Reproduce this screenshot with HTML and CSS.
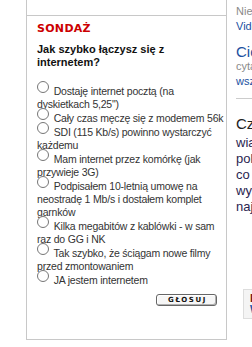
FILE: index.html
```html
<!DOCTYPE html>
<html lang="pl">
<head>
  <meta charset="UTF-8" />
  <title>Sondaż</title>
  <link rel="stylesheet" href="styles.css">
</head>
<body>
  <div class="page">
    <div class="gutter"></div>

    <div class="poll-col">
      <div class="poll-top"></div>
      <form class="poll">
        <h3 class="poll-title">SONDAŻ</h3>
        <p class="poll-question">Jak szybko łączysz się z internetem?</p>
        <ul class="options">
          <li><label><input type="radio" name="answer" value="1"> Dostaję internet pocztą (na dyskietkach 5,25")</label></li>
          <li><label><input type="radio" name="answer" value="2"> Cały czas męczę się z modemem 56k</label></li>
          <li><label><input type="radio" name="answer" value="3"> SDI (115 Kb/s) powinno wystarczyć każdemu</label></li>
          <li><label><input type="radio" name="answer" value="4"> Mam internet przez komórkę (jak przywieje 3G)</label></li>
          <li><label><input type="radio" name="answer" value="5"> Podpisałem 10-letnią umowę na neostradę 1 Mb/s i dostałem komplet garnków</label></li>
          <li><label><input type="radio" name="answer" value="6"> Kilka megabitów z kablówki - w sam raz do GG i NK</label></li>
          <li><label><input type="radio" name="answer" value="7"> Tak szybko, że ściągam nowe filmy przed zmontowaniem</label></li>
          <li><label><input type="radio" name="answer" value="8"> JA jestem internetem</label></li>
        </ul>
        <div class="poll-actions">
          <button type="button" class="vote-btn">GŁOSUJ</button>
        </div>
      </form>
    </div>

    <div class="side">
      <div class="side-news">
        <a class="small grey">Nieruchomości</a>
        <a class="small blue">Video</a>
        <a class="big blue">Ciekawostki</a>
        <span class="small grey">cytaty dnia</span>
        <a class="small blue">wszystkie</a>
      </div>
      <div class="side-article">
        <h4 class="big dark">Czytaj</h4>
        <p>wiadomości<br>polityka<br>co słychać<br>wywiady<br>najnowsze</p>
      </div>
      <div class="side-box">
        <b>Ekstra</b>
        <a>Więcej</a>
      </div>
    </div>
  </div>
</body>
</html>
```

FILE: styles.css
```css
body {
  margin: 0;
  font-family: 'Liberation Sans', Arial, sans-serif;
  background: #fff;
  color: #222;
  overflow: hidden;
}

.page {
  display: flex;
  width: 252px;
  height: 347px;
  overflow: hidden;
}

.gutter {
  width: 26px;
  flex-shrink: 0;
}

.poll-col {
  width: 199px;
  flex-shrink: 0;
  border-left: 1px solid #c8c8c8;
  border-right: 1px solid #c8c8c8;
  align-self: flex-start;
}

.poll-top {
  height: 15px;
  border-bottom: 1px solid #c8c8c8;
}

.poll {
  padding: 6px 2px 33px 10px;
  border-bottom: 1px solid #c8c8c8;
  font-size: 11px;
}

.poll-title {
  margin: 0 0 8px;
  font-family: 'DejaVu Sans', sans-serif;
  font-size: 11px;
  line-height: 13px;
  color: #cc0000;
  letter-spacing: 0.3px;
}

.poll-question {
  margin: 0 0 16px;
  font-weight: bold;
  font-size: 11px;
  line-height: 13px;
  color: #111;
}

.options {
  list-style: none;
  margin: 0;
  padding: 0;
  font-size: 10.5px;
  line-height: 13px;
  letter-spacing: -0.2px;
  color: #333;
}

.options li {
  margin-bottom: 1px;
}

.options input {
  width: 12px;
  height: 12px;
  margin: -5px 2px 0 0;
  vertical-align: 2px;
}

.poll-actions {
  text-align: right;
  margin: 7px 7px 0 0;
  line-height: 0;
}

.vote-btn {
  font-family: 'DejaVu Sans', sans-serif;
  font-size: 7px;
  font-weight: bold;
  line-height: 10px;
  letter-spacing: 1.6px;
  width: 61px;
  height: 12px;
  padding: 0 0 0 2px;
  background: #f6f6f6;
  color: #111;
  border: 1px solid #666;
  border-radius: 3px;
  box-shadow: inset -1px -1px 0 #b0b0b0, inset 1px 1px 0 #fff;
}

.side {
  margin-left: 9px;
  width: 120px;
  flex-shrink: 0;
}

.side-news {
  padding: 4px 0 9px;
  border-bottom: 1px solid #ccc;
}

.side a, .side span {
  display: block;
  white-space: nowrap;
}

.small {
  font-size: 11px;
  line-height: 15px;
}

.big {
  font-size: 15px;
  line-height: 14px;
  margin: 11px 0 0;
  font-weight: normal;
}

.grey { color: #8a8a8a; }
.blue { color: #2050a0; }
.dark { color: #222; }

.side-article h4 {
  margin: 18px 0 4px;
}

.side-article p {
  margin: 0;
  font-size: 13px;
  line-height: 16px;
  color: #2a2550;
}

.side-box {
  margin: 74px 0 0 7px;
  padding: 3px 6px;
  background: #f4f4f4;
  border: 1px solid #ddd;
  font-size: 11px;
  line-height: 11px;
}

.side-box b {
  display: block;
  color: #7a1a1a;
}

.side-box a {
  color: #2050a0;
  font-weight: bold;
}
```
